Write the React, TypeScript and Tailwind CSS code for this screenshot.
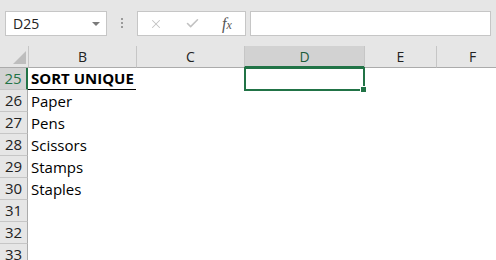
import { X, Check } from "lucide-react";

const columns = [
  { label: "B", width: "w-[108px]" },
  { label: "C", width: "w-[108px]" },
  { label: "D", width: "w-[120px]", selected: true },
  { label: "E", width: "w-[72px]" },
  { label: "F", width: "w-[72px]" },
];

const rows: { num: number; text?: string; header?: boolean }[] = [
  { num: 25, text: "SORT UNIQUE", header: true },
  { num: 26, text: "Paper" },
  { num: 27, text: "Pens" },
  { num: 28, text: "Scissors" },
  { num: 29, text: "Stamps" },
  { num: 30, text: "Staples" },
  { num: 31 },
  { num: 32 },
  { num: 33 },
];

function FormulaBar() {
  return (
    <div className="flex h-[46px] items-start bg-[#e6e6e6] pt-[11px] pl-[5px] font-['Open_Sans',sans-serif]">
      <div className="flex h-[25px] w-[102px] items-center justify-between border border-[#c6c6c6] bg-white pl-[7px] pr-[6px]">
        <span className="text-[14px] text-[#222]">D25</span>
        <span className="h-0 w-0 border-x-[4px] border-t-[4px] border-x-transparent border-t-[#7a7a7a]" />
      </div>
      <div className="flex w-[30px] flex-col items-center gap-[2px] pt-[7px]">
        <span className="h-[2px] w-[2px] bg-[#9a9a9a]" />
        <span className="h-[2px] w-[2px] bg-[#9a9a9a]" />
        <span className="h-[2px] w-[2px] bg-[#9a9a9a]" />
      </div>
      <div className="flex h-[25px] w-[109px] items-center border border-[#c6c6c6] bg-white pl-[11px]">
        <X className="h-[14px] w-[14px] text-[#c2c2c2]" strokeWidth={1.75} />
        <Check className="ml-[22px] h-[15px] w-[15px] text-[#c2c2c2]" strokeWidth={2.5} />
        <span className="ml-[22px] font-['Liberation_Serif',serif] text-[16px] italic text-[#555]">
          f<span className="text-[12px]">x</span>
        </span>
      </div>
      <div className="ml-[4px] h-[25px] w-[241px] border border-[#c6c6c6] bg-white" />
    </div>
  );
}

function ColumnHeaders() {
  return (
    <div className="flex h-[22px] bg-[#e6e6e6] font-['Open_Sans',sans-serif] text-[14px] text-[#222]">
      <div className="relative w-[28px] shrink-0 border-b border-[#ababab]">
        <span className="absolute bottom-[3px] right-[2px] h-0 w-0 border-b-[13px] border-l-[13px] border-b-[#bdbdbd] border-l-transparent" />
      </div>
      {columns.map((c) => (
        <div
          key={c.label}
          className={
            c.selected
              ? `${c.width} flex shrink-0 items-center justify-center border-l border-[#c6c6c6] border-b-2 border-b-[#217346] bg-[#d2d2d2] text-[#1d5c3a]`
              : `${c.width} flex shrink-0 items-center justify-center border-l border-[#c6c6c6] border-b border-b-[#ababab]`
          }
        >
          {c.label}
        </div>
      ))}
    </div>
  );
}

export default function App() {
  return (
    <div className="h-[260px] w-[496px] overflow-hidden bg-white">
      <FormulaBar />
      <ColumnHeaders />
      {rows.map((r) => (
        <div key={r.num} className="flex h-[22px] font-['Open_Sans',sans-serif]">
          <div
            className={
              r.num === 25
                ? "flex w-[28px] shrink-0 items-center justify-center border-b border-[#c6c6c6] border-r-2 border-r-[#217346] bg-[#d2d2d2] text-[15px] text-[#217346]"
                : "flex w-[28px] shrink-0 items-center justify-center border-b border-r border-[#c6c6c6] border-r-[#ababab] bg-[#e6e6e6] text-[15px] text-[#222]"
            }
          >
            {r.num}
          </div>
          <div className="flex w-[108px] shrink-0 items-center">
            {r.text && (
              <span
                className={
                  r.header
                    ? "flex h-full w-full items-center border-b border-black pl-[3px] text-[15px] font-bold text-black"
                    : "pl-[3px] text-[15px] text-black"
                }
              >
                {r.text}
              </span>
            )}
          </div>
          <div className="w-[108px] shrink-0" />
          <div className="relative w-[120px] shrink-0">
            {r.num === 25 && (
              <div className="absolute -top-[1px] left-0 h-[24px] w-[121px] border-2 border-[#217346]">
                <span className="absolute -bottom-[3px] -right-[3px] h-[5px] w-[5px] bg-[#217346] outline outline-1 outline-white" />
              </div>
            )}
          </div>
        </div>
      ))}
    </div>
  );
}
